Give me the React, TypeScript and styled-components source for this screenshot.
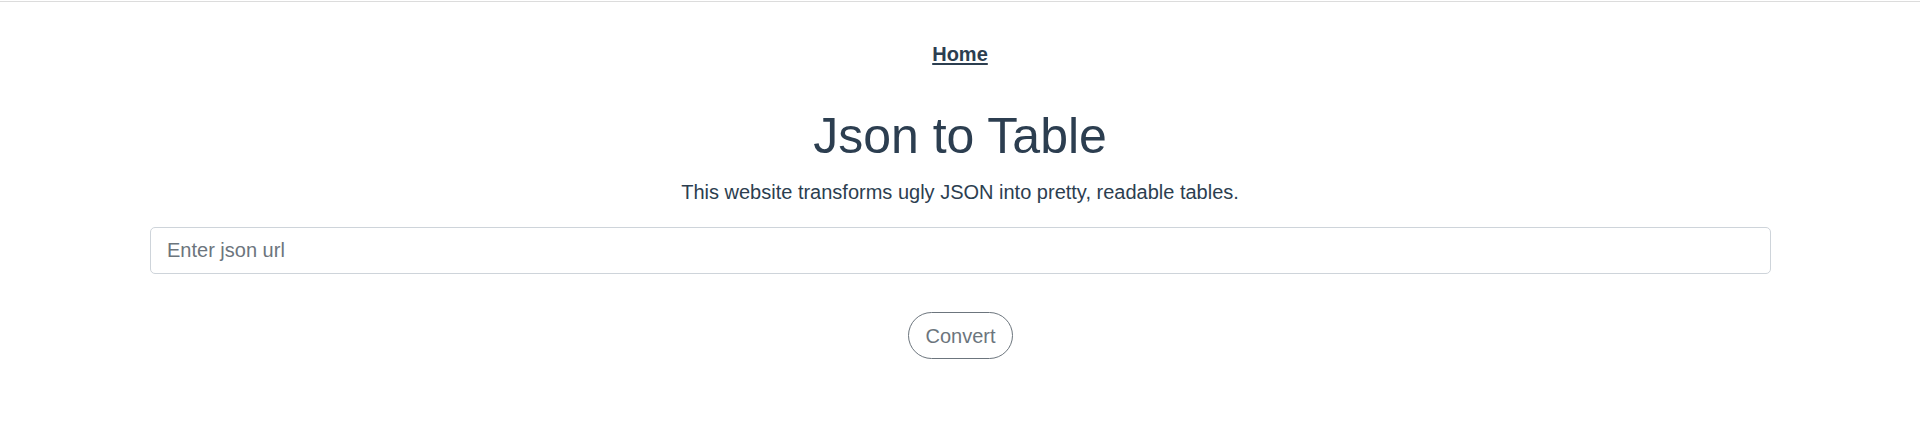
import React from "react";
import styled, { createGlobalStyle } from "styled-components";

const GlobalStyle = createGlobalStyle`
  html, body {
    margin: 0;
    padding: 0;
    background: #ffffff;
  }
  body {
    font-family: "Liberation Sans", Arial, Helvetica, sans-serif;
    color: #2c3e50;
    -webkit-font-smoothing: antialiased;
  }
  * { box-sizing: border-box; }
`;

const Rule = styled.div`
  margin-top: 1px;
  height: 1px;
  background: #dcdcdc;
`;

const AppShell = styled.div`
  display: flex;
  flex-direction: column;
  align-items: center;
  text-align: center;
  color: #2c3e50;
`;

const Nav = styled.nav`
  padding: 37px 0 0;
  display: flex;
  justify-content: center;
`;

const NavLink = styled.a`
  font-size: 20px;
  line-height: 30px;
  font-weight: bold;
  color: #2c3e50;
  text-decoration: underline;
  text-underline-offset: 2px;
  cursor: pointer;
`;

const Title = styled.h1`
  margin: 38px 0 0;
  font-size: 50px;
  line-height: 58px;
  font-weight: 400;
  color: #2c3e50;
`;

const Lead = styled.p`
  margin: 12px 0 0;
  font-size: 20px;
  line-height: 30px;
  color: #2c3e50;
`;

const Form = styled.form`
  align-self: stretch;
  display: flex;
  flex-direction: column;
  align-items: center;
  padding: 0 149px 0 150px;
  margin-top: 20px;
`;

const UrlInput = styled.input`
  width: 100%;
  height: 47px;
  padding: 0 16px;
  font-family: "Liberation Sans", Arial, Helvetica, sans-serif;
  font-size: 20px;
  color: #495057;
  background: #fff;
  border: 1px solid #ced4da;
  border-radius: 5px;
  outline: none;
  &::placeholder {
    color: #6c757d;
    opacity: 1;
  }
`;

const ConvertButton = styled.button`
  margin-top: 38px;
  height: 47px;
  padding: 0 16px;
  font-family: "Liberation Sans", Arial, Helvetica, sans-serif;
  font-size: 20px;
  line-height: 30px;
  color: #6c757d;
  background: transparent;
  border: 1px solid #6c757d;
  border-radius: 24px;
  cursor: pointer;
`;

export default function App() {
  return (
    <>
      <GlobalStyle />
      <Rule />
      <AppShell>
        <Nav>
          <NavLink>Home</NavLink>
        </Nav>
        <Title>Json to Table</Title>
        <Lead>This website transforms ugly JSON into pretty, readable tables.</Lead>
        <Form onSubmit={(e) => e.preventDefault()}>
          <UrlInput type="text" placeholder="Enter json url" />
          <ConvertButton type="button">Convert</ConvertButton>
        </Form>
      </AppShell>
    </>
  );
}
